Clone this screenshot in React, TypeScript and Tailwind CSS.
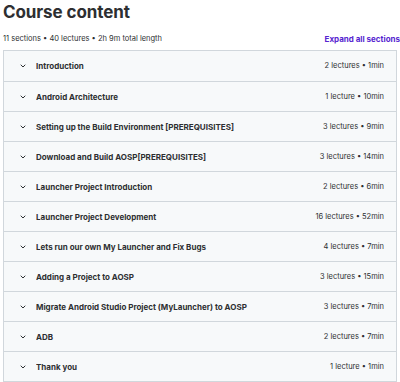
import React from "react"

const sections = [
  { title: "Introduction", meta: "2 lectures • 1min" },
  { title: "Android Architecture", meta: "1 lecture • 10min" },
  { title: "Setting up the Build Environment [PREREQUISITES]", meta: "3 lectures • 9min" },
  { title: "Download and Build AOSP[PREREQUISITES]", meta: "3 lectures • 14min" },
  { title: "Launcher Project Introduction", meta: "2 lectures • 6min" },
  { title: "Launcher Project Development", meta: "16 lectures • 52min" },
  { title: "Lets run our own My Launcher and Fix Bugs", meta: "4 lectures • 7min" },
  { title: "Adding a Project to AOSP", meta: "3 lectures • 15min" },
  { title: "Migrate Android Studio Project (MyLauncher) to AOSP", meta: "3 lectures • 7min" },
  { title: "ADB", meta: "2 lectures • 7min" },
  { title: "Thank you", meta: "1 lecture • 1min" }
]

const Chevron = () => (
  <svg width="8" height="8" viewBox="0 0 24 24" fill="none" stroke="#2d2f31" strokeWidth="3" strokeLinecap="round" strokeLinejoin="round">
    <path d="M6 9l6 6 6-6" />
  </svg>
)

const App = () => {
  return (
    <div className="w-[400px] h-[382px] overflow-hidden bg-white text-[#2d2f31] font-['Inter','Liberation_Sans',sans-serif]">
      <h2 className="pl-[3px] pt-[2px] text-[17px] leading-[20px] font-bold tracking-[-0.1px]">
        Course content
      </h2>
      <div className="flex items-center justify-between pl-[3px] pt-[8px] h-[26px]">
        <span className="text-[7.5px] leading-[10px]">11 sections • 40 lectures • 2h 9m total length</span>
        <span className="text-[8px] leading-[10px] font-bold text-[#5624d0] whitespace-nowrap">
          Expand all sections
        </span>
      </div>
      <div className="ml-[3px] w-[394px] border border-[#d1d7dc] mt-[2px]">
        {sections.map((s, i) => (
          <div
            key={s.title}
            className={
              "flex items-center h-[30px] bg-[#f7f9fa] pl-[15px] pr-[12px] " +
              (i > 0 ? "border-t border-[#d1d7dc]" : "")
            }>
            <Chevron />
            <span className="ml-[9px] flex-1 text-[8px] font-bold leading-[10px] truncate">
              {s.title}
            </span>
            <span className="text-[7.5px] leading-[10px] whitespace-nowrap">{s.meta}</span>
          </div>
        ))}
      </div>
    </div>
  )
}

export default App
